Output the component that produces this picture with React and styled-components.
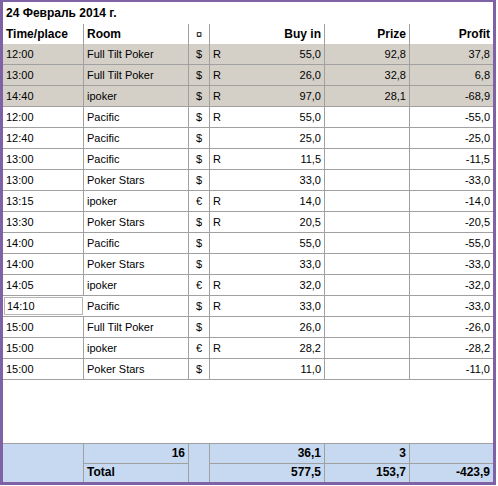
import styled, { createGlobalStyle } from 'styled-components';

const GlobalStyle = createGlobalStyle`
  body {
    margin: 0;
    background: #ffffff;
    font-family: "Liberation Sans", Arial, sans-serif;
    color: #000000;
  }
`;

const COLS = '81px 105px 21px 30px 85px 85px 83px';

const Frame = styled.div`
  width: 490px;
  height: 480px;
  border-style: solid;
  border-color: #7f62a5;
  border-width: 2px 3px 3px 3px;
  display: flex;
  flex-direction: column;
  background: #ffffff;
`;

const Title = styled.div`
  height: 22px;
  padding-left: 3px;
  font-size: 12px;
  font-weight: bold;
  line-height: 22px;
`;

const Row = styled.div`
  display: grid;
  grid-template-columns: ${COLS};
  height: ${(p) => (p.$head ? '20px' : '21px')};
  background: ${(p) => (p.$shade ? '#d4d0c8' : 'transparent')};
  box-sizing: border-box;
  border-bottom: ${(p) => (p.$head ? 'none' : '1px solid #a0a0a0')};
`;

const Cell = styled.div`
  box-sizing: border-box;
  border-right: ${(p) => (p.$open ? 'none' : '1px solid #a0a0a0')};
  padding: 0 3px;
  font-size: ${(p) => (p.$head ? '12px' : '11px')};
  font-weight: ${(p) => (p.$head ? 'bold' : 'normal')};
  text-align: ${(p) => p.$align || 'left'};
  line-height: 20px;
  white-space: nowrap;
  overflow: hidden;
  &:last-child {
    border-right: none;
  }
`;

const FocusCell = styled(Cell)`
  margin: 1px;
  border: 1px solid #b4b4b4;
  line-height: 17px;
  padding: 0 2px;
`;

const Spacer = styled.div`
  flex: 1;
`;

const Footer = styled.div`
  display: grid;
  grid-template-columns: 81px 105px 21px 115px 85px 83px;
  grid-template-rows: 20px 18px;
  background: #c6d9f0;
  border-top: 1px solid #a0a0a0;
  font-size: 12px;
  font-weight: bold;
`;

const FootCell = styled.div`
  box-sizing: border-box;
  padding: 0 3px;
  grid-column: ${(p) => p.$col};
  grid-row: ${(p) => (p.$span ? '1 / span 2' : p.$row)};
  text-align: ${(p) => p.$align || 'right'};
  line-height: ${(p) => (p.$row === 2 ? '17px' : '19px')};
  border-right: ${(p) => (p.$col === 6 ? 'none' : '1px solid #a0a0a0')};
  border-bottom: ${(p) => (p.$row === 1 ? '1px solid #a0a0a0' : 'none')};
`;

const rows = [
  ['12:00', 'Full Tilt Poker', '$', 'R', '55,0', '92,8', '37,8', true],
  ['13:00', 'Full Tilt Poker', '$', 'R', '26,0', '32,8', '6,8', true],
  ['14:40', 'ipoker', '$', 'R', '97,0', '28,1', '-68,9', true],
  ['12:00', 'Pacific', '$', 'R', '55,0', '', '-55,0'],
  ['12:40', 'Pacific', '$', '', '25,0', '', '-25,0'],
  ['13:00', 'Pacific', '$', 'R', '11,5', '', '-11,5'],
  ['13:00', 'Poker Stars', '$', '', '33,0', '', '-33,0'],
  ['13:15', 'ipoker', '€', 'R', '14,0', '', '-14,0'],
  ['13:30', 'Poker Stars', '$', 'R', '20,5', '', '-20,5'],
  ['14:00', 'Pacific', '$', '', '55,0', '', '-55,0'],
  ['14:00', 'Poker Stars', '$', '', '33,0', '', '-33,0'],
  ['14:05', 'ipoker', '€', 'R', '32,0', '', '-32,0'],
  ['14:10', 'Pacific', '$', 'R', '33,0', '', '-33,0', false, true],
  ['15:00', 'Full Tilt Poker', '$', '', '26,0', '', '-26,0'],
  ['15:00', 'ipoker', '€', 'R', '28,2', '', '-28,2'],
  ['15:00', 'Poker Stars', '$', '', '11,0', '', '-11,0'],
];

function App() {
  return (
    <>
      <GlobalStyle />
      <Frame>
        <Title>24 Февраль 2014 г.</Title>
        <Row $head>
          <Cell $head>Time/place</Cell>
          <Cell $head>Room</Cell>
          <Cell $align="center">¤</Cell>
          <Cell $head $open />
          <Cell $head $align="right">Buy in</Cell>
          <Cell $head $align="right">Prize</Cell>
          <Cell $head $align="right">Profit</Cell>
        </Row>
        {rows.map(([time, room, cur, re, buy, prize, profit, shade, focus], i) => (
          <Row key={i} $shade={shade}>
            {focus ? <FocusCell>{time}</FocusCell> : <Cell>{time}</Cell>}
            <Cell>{room}</Cell>
            <Cell $align="center">{cur}</Cell>
            <Cell $open>{re}</Cell>
            <Cell $align="right">{buy}</Cell>
            <Cell $align="right">{prize}</Cell>
            <Cell $align="right">{profit}</Cell>
          </Row>
        ))}
        <Spacer />
        <Footer>
          <FootCell $col={1} $span />
          <FootCell $col={2} $row={1}>16</FootCell>
          <FootCell $col={3} $span />
          <FootCell $col={4} $row={1}>36,1</FootCell>
          <FootCell $col={5} $row={1}>3</FootCell>
          <FootCell $col={6} $row={1} />
          <FootCell $col={2} $row={2} $align="left">Total</FootCell>
          <FootCell $col={4} $row={2}>577,5</FootCell>
          <FootCell $col={5} $row={2}>153,7</FootCell>
          <FootCell $col={6} $row={2}>-423,9</FootCell>
        </Footer>
      </Frame>
    </>
  );
}

export default App;
